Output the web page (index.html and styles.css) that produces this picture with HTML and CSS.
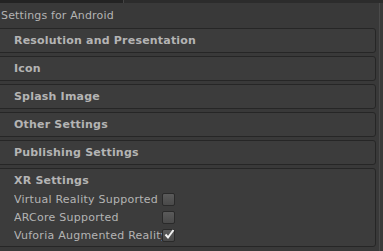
FILE: index.html
```html
<!DOCTYPE html>
<html lang="en">
<head>
    <meta charset="UTF-8">
    <title>Player Settings</title>
    <link rel="stylesheet" href="styles.css">
</head>
<body>
    <div class="tabs">
        <div class="tab-left"></div>
        <div class="tab-right"></div>
    </div>

    <div class="inspector">
        <div class="title">Settings for Android</div>

        <div class="section">Resolution and Presentation</div>
        <div class="section">Icon</div>
        <div class="section">Splash Image</div>
        <div class="section">Other Settings</div>
        <div class="section">Publishing Settings</div>

        <div class="section open">
            <div class="section-head">XR Settings</div>
            <div class="row">
                <span class="label">Virtual Reality Supported</span>
                <span class="check"></span>
            </div>
            <div class="row">
                <span class="label">ARCore Supported</span>
                <span class="check"></span>
            </div>
            <div class="row">
                <span class="label">Vuforia Augmented Reality Supported</span>
                <span class="check on">
                    <svg width="12" height="12" viewBox="0 0 12 12"><path d="M2.5 6.5 L5 9.5 L10.5 2" fill="none" stroke="#f2f2f2" stroke-width="2"/></svg>
                </span>
            </div>
        </div>
    </div>
</body>
</html>
```

FILE: styles.css
```css
body {
    margin: 0;
    background-color: #393939;
    font-family: "DejaVu Sans", Verdana, sans-serif;
    color: #b4b4b4;
    width: 383px;
    height: 251px;
    overflow: hidden;
}

.tabs {
    display: flex;
    height: 3px;
}

.tab-left {
    width: 123px;
    background-color: #232323;
}

.tab-right {
    flex: 1;
    background-color: #2c2c2c;
    border-left: 1px solid #444;
}

.inspector {
    border-right: 1px solid #4a4a4a;
    margin-right: 3px;
    padding-right: 3px;
    height: 248px;
}

.title {
    height: 25px;
    line-height: 25px;
    padding-left: 1px;
    font-size: 11px;
    letter-spacing: 0.15px;
}

.section {
    margin-left: -4px;
    margin-bottom: 3px;
    height: 23px;
    line-height: 23px;
    padding-left: 17px;
    background-color: #3c3c3c;
    border: 1px solid #262626;
    border-radius: 3px;
    font-size: 11px;
    font-weight: bold;
    letter-spacing: 0.2px;
}

.section.open {
    height: 77px;
    line-height: normal;
}

.section-head {
    height: 21px;
    line-height: 23px;
}

.row {
    display: flex;
    align-items: center;
    height: 18px;
    font-weight: normal;
    letter-spacing: 0.25px;
}

.label {
    width: 148px;
    white-space: nowrap;
    overflow: hidden;
}

.check {
    width: 11px;
    height: 11px;
    border: 1px solid #2a2a2a;
    border-radius: 2px;
    background: linear-gradient(#5a5a5a, #4a4a4a);
    position: relative;
}

.check svg {
    position: absolute;
    left: 0;
    top: -2px;
}
```
